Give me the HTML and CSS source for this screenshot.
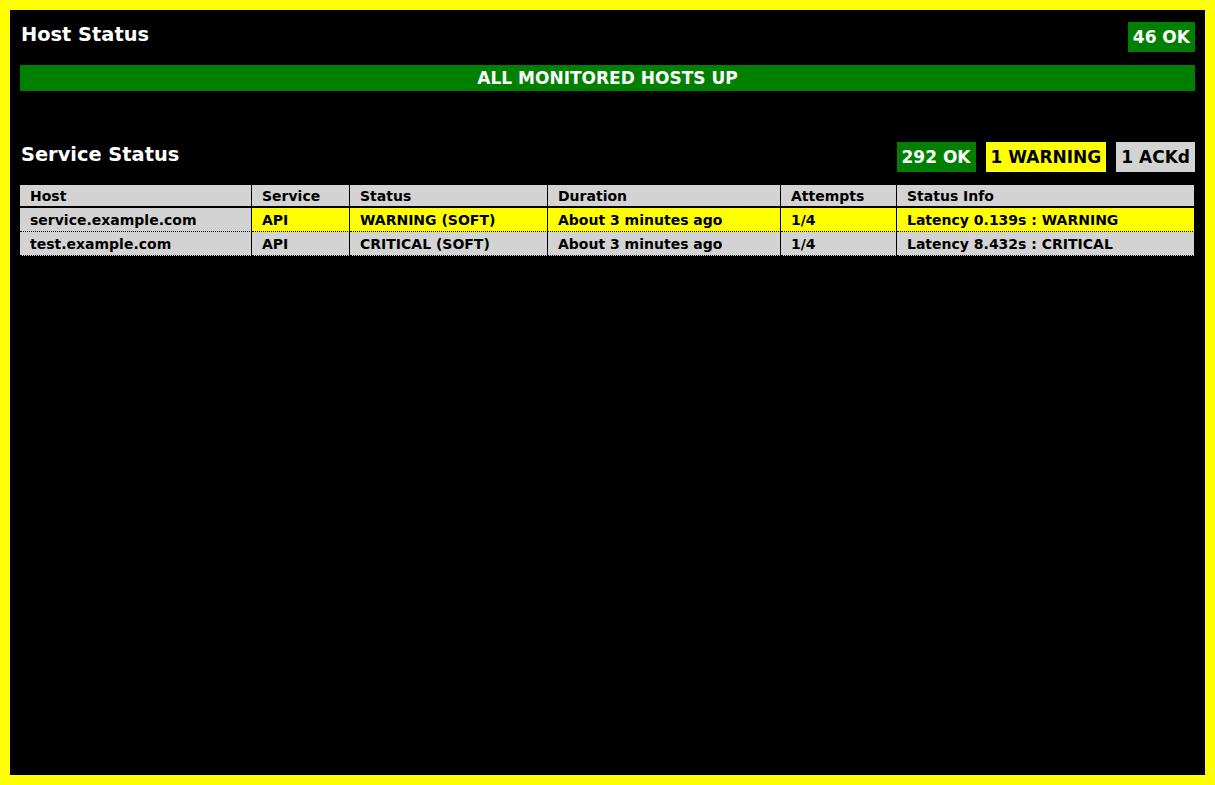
FILE: index.html
```html
<!DOCTYPE html>
<html>
<head>
<meta charset="utf-8">
<title>Status</title>
<link rel="stylesheet" href="styles.css">
</head>
<body>
<div class="section-head">
  <h2 class="title">Host Status</h2>
  <div class="badges">
    <span class="badge ok">46 OK</span>
  </div>
</div>
<div class="banner">ALL MONITORED HOSTS UP</div>

<div class="section-head service-head">
  <h2 class="title">Service Status</h2>
  <div class="badges">
    <span class="badge ok">292 OK</span>
    <span class="badge warn">1 WARNING</span>
    <span class="badge ack">1 ACKd</span>
  </div>
</div>

<table class="services">
  <colgroup>
    <col class="c-host">
    <col class="c-service">
    <col class="c-status">
    <col class="c-duration">
    <col class="c-attempts">
    <col class="c-info">
  </colgroup>
  <thead>
    <tr>
      <th>Host</th>
      <th>Service</th>
      <th>Status</th>
      <th>Duration</th>
      <th>Attempts</th>
      <th>Status Info</th>
    </tr>
  </thead>
  <tbody>
    <tr class="warning">
      <td class="host">service.example.com</td>
      <td>API</td>
      <td>WARNING (SOFT)</td>
      <td>About 3 minutes ago</td>
      <td>1/4</td>
      <td>Latency 0.139s : WARNING</td>
    </tr>
    <tr class="acked">
      <td class="host">test.example.com</td>
      <td>API</td>
      <td>CRITICAL (SOFT)</td>
      <td>About 3 minutes ago</td>
      <td>1/4</td>
      <td>Latency 8.432s : CRITICAL</td>
    </tr>
  </tbody>
</table>
</body>
</html>
```

FILE: styles.css
```css
html, body {
  margin: 0;
  padding: 0;
}

body {
  box-sizing: border-box;
  width: 1215px;
  height: 785px;
  border: 10px solid #ffff00;
  background: #000;
  padding: 10px;
  font-family: "DejaVu Sans", Verdana, sans-serif;
  font-weight: bold;
  color: #000;
  overflow: hidden;
}

.section-head {
  display: flex;
  justify-content: space-between;
  align-items: flex-start;
}

.title {
  margin: 4px 0 0 1px;
  font-size: 19.4px;
  line-height: 22px;
  font-weight: bold;
  color: #fff;
}

.badges {
  display: flex;
  gap: 10px;
  margin-top: 2px;
}

.badge {
  height: 30px;
  line-height: 30px;
  padding: 0 5px;
  font-size: 17px;
  white-space: nowrap;
}

.badge.ok {
  background: #008000;
  color: #fff;
}

.badge.warn {
  background: #ffff00;
  color: #000;
}

.badge.ack {
  background: #d3d3d3;
  color: #000;
}

.banner {
  margin-top: 13px;
  height: 26px;
  box-sizing: border-box;
  padding-top: 1px;
  line-height: 25px;
  background: #008000;
  color: #fff;
  font-size: 17px;
  text-align: center;
}

.service-head {
  margin-top: 49px;
}

.services {
  margin-top: 13px;
  width: 1175px;
  table-layout: fixed;
  border-collapse: separate;
  border-spacing: 0;
  font-size: 14px;
}

.c-host { width: 232px; }
.c-service { width: 98px; }
.c-status { width: 198px; }
.c-duration { width: 233px; }
.c-attempts { width: 116px; }
.c-info { width: 298px; }

.services th,
.services td {
  text-align: left;
  padding: 0 10px;
  border-right: 1px solid #000;
  white-space: nowrap;
  overflow: hidden;
  background: #d3d3d3;
}

.services th {
  height: 21px;
  box-sizing: border-box;
  padding-top: 2px;
  line-height: 19px;
  border-bottom: 2px solid #000;
}

.services td {
  height: 24px;
  box-sizing: border-box;
  padding-top: 1px;
  line-height: 22px;
  border-bottom: 1px dotted #000;
}

.services tr.warning td {
  background: #ffff00;
}

.services tr.warning td.host {
  background: #d3d3d3;
}
```
